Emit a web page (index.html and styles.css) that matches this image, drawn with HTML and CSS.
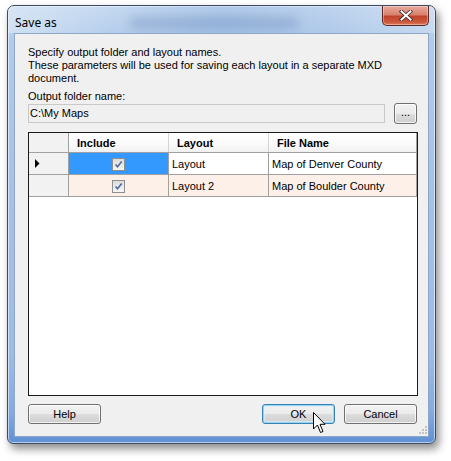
FILE: index.html
```html
<!DOCTYPE html>
<html>
<head>
<meta charset="utf-8">
<link rel="stylesheet" href="styles.css">
</head>
<body>
<div class="desk">
  <div class="window">
    <div class="titlebar">
      <span class="title">Save as</span>
      <span class="ghost"></span>
      <div class="close">
        <svg width="14" height="11" viewBox="0 0 14 11"><path d="M2.5 1.5 L11.5 9.5 M11.5 1.5 L2.5 9.5" stroke="#3a2a2a" stroke-width="3.6" stroke-linecap="square"/><path d="M2.5 1.5 L11.5 9.5 M11.5 1.5 L2.5 9.5" stroke="#ffffff" stroke-width="2" stroke-linecap="square"/></svg>
      </div>
    </div>
    <div class="client">
      <p class="desc">Specify output folder and layout names.<br>These parameters will be used for saving each layout in a separate MXD<br>document.</p>
      <div class="lbl">Output folder name:</div>
      <div class="pathrow">
        <div class="textbox">C:\My Maps</div>
        <div class="btn browse">...</div>
      </div>
      <div class="grid">
        <table>
          <tr class="head">
            <th class="rh"></th>
            <th class="c-inc">Include</th>
            <th class="c-lay">Layout</th>
            <th class="c-fn">File Name</th>
          </tr>
          <tr class="row">
            <td class="rh"><svg width="5" height="9" viewBox="0 0 5 9"><path d="M0 0 L4.5 4.5 L0 9 Z" fill="#000"/></svg></td>
            <td class="chk sel"><span class="cb"><svg width="11" height="11" viewBox="0 0 11 11"><path d="M2.5 5.5 L4.5 7.8 L8.7 2.6" fill="none" stroke="#5068a0" stroke-width="1.6"/></svg></span></td>
            <td>Layout</td>
            <td>Map of Denver County</td>
          </tr>
          <tr class="row alt">
            <td class="rh"></td>
            <td class="chk"><span class="cb"><svg width="11" height="11" viewBox="0 0 11 11"><path d="M2.5 5.5 L4.5 7.8 L8.7 2.6" fill="none" stroke="#5068a0" stroke-width="1.6"/></svg></span></td>
            <td>Layout 2</td>
            <td>Map of Boulder County</td>
          </tr>
        </table>
      </div>
      <div class="buttons">
        <div class="btn">Help</div>
        <div class="spacer"></div>
        <div class="btn focus">OK</div>
        <div class="btn">Cancel</div>
      </div>
      <svg class="grip" width="8" height="8" viewBox="0 0 8 8">
        <rect x="6" y="0" width="2" height="2" fill="#c4c4c4"/>
        <rect x="3" y="3" width="2" height="2" fill="#c4c4c4"/>
        <rect x="6" y="3" width="2" height="2" fill="#c4c4c4"/>
        <rect x="0" y="6" width="2" height="2" fill="#c4c4c4"/>
        <rect x="3" y="6" width="2" height="2" fill="#c4c4c4"/>
        <rect x="6" y="6" width="2" height="2" fill="#c4c4c4"/>
      </svg>
    </div>
  </div>
  <svg class="cursor" width="13" height="22" viewBox="0 0 13 22"><path d="M0.5 0.5 L0.5 17 L4.5 13 L7.5 20.5 L10 19.5 L7 12.3 L12 12.3 Z" fill="#fff" stroke="#000" stroke-width="1" stroke-linejoin="miter"/></svg>
</div>
</body>
</html>
```
FILE: styles.css
```css
html, body {
  margin: 0;
  padding: 0;
  background: #ffffff;
}
body {
  width: 451px;
  height: 461px;
  overflow: hidden;
  font-family: "Liberation Sans", Arial, sans-serif;
  font-size: 11px;
  color: #000;
}
.desk {
  position: relative;
  width: 451px;
  height: 461px;
  padding: 5px 0 0 7px;
  box-sizing: border-box;
}
.window {
  width: 429px;
  height: 439px;
  box-sizing: border-box;
  border: 1px solid #3b4a60;
  border-radius: 7px 7px 6px 6px;
  background:
    linear-gradient(180deg, rgba(255,255,255,0.25) 0%, rgba(255,255,255,0) 8%),
    linear-gradient(180deg, #b4cdeb 0%, #a6c2e7 40%, #9cbbe6 80%, #84aae0 93%, #5f90d6 100%);
  box-shadow: 3px 5px 9px rgba(0,0,0,0.45), inset 0 0 0 1px rgba(255,255,255,0.55);
  display: flex;
  flex-direction: column;
}
.titlebar {
  height: 27px;
  display: flex;
  align-items: flex-start;
  background: linear-gradient(90deg, rgba(230,240,250,0.55) 0%, rgba(200,220,245,0.1) 22%, rgba(100,145,210,0.22) 50%, rgba(140,175,225,0.15) 75%, rgba(230,240,250,0.3) 100%);
  border-radius: 6px 6px 0 0;
}
.title {
  font-family: "Noto Sans", "DejaVu Sans", sans-serif;
  font-size: 12px;
  line-height: 16px;
  margin: 9px 0 0 7px;
  color: #000;
}
.ghost {
  width: 170px;
  height: 12px;
  margin: 11px 0 0 72px;
  background: rgba(60,95,150,0.22);
  filter: blur(5px);
  border-radius: 6px;
}
.close {
  margin-left: auto;
  margin-right: 6px;
  width: 47px;
  height: 20px;
  box-sizing: border-box;
  border: 1px solid #5a2a24;
  border-top: none;
  border-radius: 0 0 5px 5px;
  background: linear-gradient(180deg, #e9aa9c 0%, #d9826f 45%, #c2432d 55%, #cb5a3e 85%, #e07d60 100%);
  box-shadow: inset 0 0 0 1px rgba(255,255,255,0.35);
  display: flex;
  align-items: center;
  justify-content: center;
}
.client {
  position: relative;
  margin: 0 6px 6px 6px;
  flex: 1;
  box-sizing: border-box;
  border: 1px solid #8ea7c6;
  background: #f0f0f0;
  padding: 12px 10px 0 13px;
}
.desc {
  margin: 0;
  line-height: 13px;
}
.lbl {
  margin-top: 5px;
  line-height: 13px;
}
.pathrow {
  display: flex;
  align-items: center;
  height: 21px;
}
.textbox {
  width: 357px;
  height: 19px;
  box-sizing: border-box;
  border: 1px solid #c9c9c9;
  background: #f0f0f0;
  line-height: 17px;
  padding-left: 1px;
}
.btn {
  box-sizing: border-box;
  border: 1px solid #707070;
  border-radius: 3px;
  background: linear-gradient(180deg, #f2f2f2 0%, #ebebeb 50%, #dddddd 50%, #cfcfcf 100%);
  box-shadow: inset 0 0 0 1px rgba(255,255,255,0.75);
  display: flex;
  align-items: center;
  justify-content: center;
  width: 73px;
  height: 20px;
}
.browse {
  width: 23px;
  height: 21px;
  margin-left: 9px;
  padding-bottom: 3px;
}
.grid {
  margin-top: 8px;
  width: 390px;
  height: 264px;
  box-sizing: border-box;
  border: 1px solid #1a1a1a;
  background: #ffffff;
}
table {
  border-collapse: collapse;
  table-layout: fixed;
  width: 388px;
}
th, td {
  padding: 0;
  border-right: 1px solid #a0a0a0;
  border-bottom: 1px solid #a0a0a0;
  white-space: nowrap;
  overflow: hidden;
}
th {
  height: 19px;
  text-align: left;
  font-weight: bold;
  padding-left: 8px;
  background: linear-gradient(180deg, #ffffff 0%, #fafafa 60%, #f0f0f0 100%);
  border-right-color: #d5d5d5;
  border-bottom-color: #a0a0a0;
}
th.rh, td.rh {
  width: 39px;
  padding: 0;
  background: #f2f2f2;
  border-right-color: #a0a0a0;
}
th.c-inc { width: 91px; }
th.c-lay { width: 91px; }
th.c-fn { width: 139px; border-right-color: #a0a0a0; }
td {
  height: 21px;
  padding-left: 3px;
}
td.rh {
  padding-left: 6px;
  box-sizing: border-box;
  vertical-align: middle;
}
td.rh svg { display: block; }
.alt td { background: #fdf0e9; }
.alt td.rh { background: #f2f2f2; }
td.chk {
  text-align: center;
  padding: 0;
}
td.sel { background: #3399ff; }
.cb {
  display: inline-block;
  width: 13px;
  height: 13px;
  box-sizing: border-box;
  border: 1px solid #8e8f8f;
  background: linear-gradient(180deg, #dcdcdc, #f6f6f6);
  vertical-align: middle;
  margin-top: 1px;
}
.cb svg { display: block; }
.buttons {
  display: flex;
  margin-top: 8px;
  width: 389px;
  gap: 9px;
}
.spacer { flex: 1; }
.btn.focus {
  border-color: #3c7fb1;
  box-shadow: inset 0 0 0 1px #8fd6f5, inset 0 0 0 2px rgba(220,244,253,0.6);
}
.grip {
  position: absolute;
  right: 1px;
  bottom: 2px;
}
.cursor {
  position: absolute;
  left: 313px;
  top: 412px;
}
```
